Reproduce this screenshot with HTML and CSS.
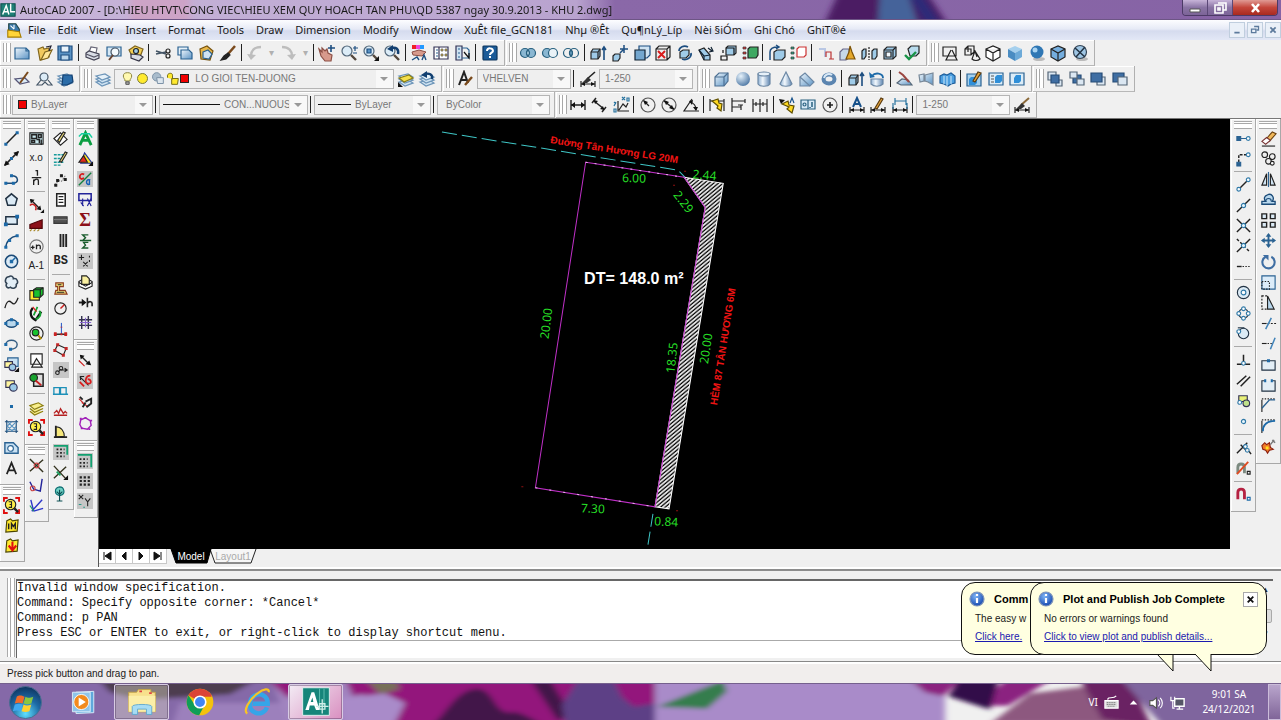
FILE: index.html
```html
<!DOCTYPE html>
<html lang="en">
<head>
<meta charset="utf-8">
<title>AutoCAD 2007</title>
<link rel="stylesheet" href="styles.css">
</head>
<body>
<svg class="defs" aria-hidden="true">
  <defs>
    <linearGradient id="gb" x1="0" y1="0" x2="1" y2="1"><stop offset="0" stop-color="#eef6fc"/><stop offset="1" stop-color="#5b93c4"/></linearGradient>
    <linearGradient id="gc" x1="0" x2="1"><stop offset="0" stop-color="#8fb0d2"/><stop offset=".4" stop-color="#f2f8fd"/><stop offset="1" stop-color="#5f86b2"/></linearGradient>
    <radialGradient id="gs" cx=".35" cy=".3" r=".8"><stop offset="0" stop-color="#e6f2fb"/><stop offset="1" stop-color="#44709f"/></radialGradient>
    <radialGradient id="gi" cx=".4" cy=".3" r=".8"><stop offset="0" stop-color="#7db4f4"/><stop offset="1" stop-color="#0a3ba8"/></radialGradient>
    <radialGradient id="orb" cx=".5" cy=".85" r=".9"><stop offset="0" stop-color="#5fe0ff"/><stop offset=".5" stop-color="#1d6aa5"/><stop offset="1" stop-color="#0c2c55"/></radialGradient>
    <pattern id="hatch" width="12" height="3" patternUnits="userSpaceOnUse" patternTransform="rotate(-40)"><path d="M0 1H12" stroke="#f4f4f4" stroke-width="1.7"/></pattern>
    <filter id="soft"><feGaussianBlur stdDeviation="3 2"/></filter>
  </defs>
  <symbol id="cube" viewBox="0 0 18 18"><path d="M3 6l3-3h9v9l-3 3H3z" fill="#9fcbe8"/><path d="M3 6h9v9M12 6l3-3"/></symbol>
  <symbol id="cubes" viewBox="0 0 18 18"><path d="M2 8l2-3h7v7l-2 3H2z" fill="#9fcbe8"/><path d="M2 8h7v7M9 8l2-3"/></symbol>
  <symbol id="layers" viewBox="0 0 18 18"><g stroke="#6b94b8" fill="#cfe3f2"><path d="M2 12l9-2 5 3-8 3z"/><path d="M2 9l9-2 5 3-8 3z"/><path d="M2 6l9-2 5 3-8 3z" fill="#e6f1f9"/></g></symbol>
  <symbol id="page" viewBox="0 0 18 18"><path d="M2 4h11l3 3v8H2z" fill="url(#gb)" stroke="#2a6292"/><path d="M13 4v3h3" stroke="#2a6292"/></symbol>
  <symbol id="dim" viewBox="0 0 18 18"><path d="M2 4v10M16 4v10M2 9h14" stroke-width="1.4"/><path d="M2 9l4-3v6zM16 9l-4-3v6z" fill="#111" stroke="none"/></symbol>
  <symbol id="dlow" viewBox="0 0 18 18"><path d="M2 11v6M16 11v6M2 14h14"/><path d="M2 14l4-2v4zM16 14l-4-2v4z" fill="#111" stroke="none"/></symbol>
  <symbol id="lens" viewBox="0 0 18 18"><circle cx="7" cy="7" r="5" fill="#dcecf7" stroke="#52677a"/><path d="M11 11l5 5" stroke="#54483e" stroke-width="2.4"/></symbol>
  <symbol id="printer" viewBox="0 0 18 18"><path d="M5 8l2-5 6 1-1 5" fill="#fff" stroke="#667"/><path d="M2 9l3-2 10 3v4l-5 2-8-3z" fill="#d9dde6" stroke="#445"/><path d="M2 10l8 3 5-2" stroke="#556"/></symbol>
  <symbol id="redlens" viewBox="0 0 18 18"><path d="M1 5V1h4M13 1h4v4M1 13v4h4M13 17h4v-4" stroke="#e01010" stroke-width="2"/><circle cx="8" cy="8" r="5.500" fill="#ffef4a"/><path d="M12 12l4 4" stroke-width="2.500"/><path d="M6 5h3v6H6M7 8h2"/></symbol>
  <symbol id="leaf" viewBox="0 0 18 18"><path d="M2 7l9-3 5 3-9 4zM2 10l5 4 9-4M2 13l5 4 9-4" fill="#f8ee8a" stroke="#8a7d12"/></symbol>
  <symbol id="node" viewBox="0 0 18 18"><circle cx="9" cy="9" r="2.200" fill="#e8f5fb" stroke="#2f79a8"/></symbol>
  <symbol id="info" viewBox="0 0 18 18"><circle cx="9" cy="9" r="7" fill="url(#gi)" stroke="#7f95b8"/><path d="M9 8v5M9 4v2" stroke="#fff" stroke-width="2.200"/></symbol>
</svg>

<header class="title">
  <svg class="title-art" viewBox="0 0 1281 20" preserveAspectRatio="none" aria-hidden="true"><g filter="url(#soft)"><path d="M838-6h90l20 32H824z" fill="#4b1a63"/><path d="M880-6h28l10 32h-40z" fill="#45649a"/><path d="M908-6h14l20 32h-16z" fill="#2f2c78"/><path d="M130-5h60v30h-60z" fill="#d49bbd" opacity=".6"/></g></svg>
  <svg class="i" viewBox="0 0 18 18"><path d="M1 2h16v14H1z" fill="#1e7f77" stroke="#0d4f4c"/><path d="M3 14l4-10 3 10M4 11h5M12 2v9h5" stroke="#fff" stroke-width="1.600"/></svg>
  <h1>AutoCAD 2007 - [D:\HIEU HTVT\CONG VIEC\HIEU XEM QUY HOACH TAN PHU\QD 5387 ngay 30.9.2013 - KHU 2.dwg]</h1>
  <div class="caption">
    <button aria-label="Minimize"><svg viewBox="0 0 20 14"><path d="M5 8h10v3H5z" fill="#fff" stroke="#555"/></svg></button>
    <button aria-label="Restore"><svg viewBox="0 0 20 14"><path d="M8 2h8v7h-3M5 4h8v8H5zM8 7h2v2H8z" stroke="#fff" stroke-width="1.600" fill="none"/></svg></button>
    <button class="close" aria-label="Close"><svg viewBox="0 0 20 14"><path d="M7 3l7 8M14 3l-7 8" stroke="#fff" stroke-width="2.600"/></svg></button>
  </div>
</header>

<nav class="menu" aria-label="Main menu">
  <svg class="i" viewBox="0 0 18 18"><path d="M3 2h8l4 6v8H3z" fill="#3a78a8" stroke="#244"/><path d="M2 9l13 2 2 6H2z" fill="#ffd53a" stroke="#a67c00"/><path d="M5 4l4 4M9 3v5" stroke="#fff"/></svg>
  <button>File</button><button>Edit</button><button>View</button><button>Insert</button><button>Format</button><button>Tools</button><button>Draw</button><button>Dimension</button><button>Modify</button><button>Window</button><button>XuÊt file_GCN181</button><button>Nhµ ®Êt</button><button>Qu¶nLý_Líp</button><button>Nèi §iÓm</button><button>Ghi Chó</button><button>GhiT®é</button>
  <div class="mdi">
    <button aria-label="Minimize drawing"><svg viewBox="0 0 16 16"><path d="M5 11h6" stroke="#5c7a9c" stroke-width="2"/></svg></button>
    <button aria-label="Restore drawing"><svg viewBox="0 0 16 16"><path d="M7 4h5v4h-2M4 7h5v4H4z" fill="none" stroke="#5c7a9c" stroke-width="1.500"/></svg></button>
    <button aria-label="Close drawing"><svg viewBox="0 0 16 16"><path d="M5 5l6 6M11 5l-6 6" stroke="#5c7a9c" stroke-width="2"/></svg></button>
  </div>
</nav>

<div class="row">
  <div class="bar w-standard" role="toolbar" aria-label="Standard">
    <button aria-label="New"><svg class="i"><use href="#page"/></svg></button>
    <button aria-label="Open"><svg class="i" viewBox="0 0 18 18"><path d="M3 5l5-2 1 2 5-1v9l-9 3z" fill="#f1c95e" stroke="#80651c"/><path d="M6 16l4-8 7-2-4 8z" fill="#ffe79a" stroke="#80651c"/><path d="M11 3l5-1-2 5" stroke="#223"/></svg></button>
    <button aria-label="Save"><svg class="i" viewBox="0 0 18 18"><path d="M2 2h14v14H2z" fill="#5b93c4" stroke="#1e4f80"/><path d="M5 2h8v6H5z" fill="#eaf3fa" stroke="#1e4f80"/><path d="M5 11h8v5H5z" fill="#bcd7ec" stroke="#1e4f80"/></svg></button>
    <i class="sep"></i>
    <button aria-label="Plot"><svg class="i"><use href="#printer"/></svg></button>
    <button aria-label="Plot preview"><svg class="i" viewBox="0 0 18 18"><path d="M2 3h14v9H2z" fill="#d7e9f6" stroke="#2a6292"/><circle cx="10" cy="8" r="4" fill="#f4fafe" stroke="#456"/><path d="M8 11l-4 5" stroke="#643" stroke-width="2"/></svg></button>
    <button aria-label="Publish"><svg class="i" viewBox="0 0 18 18"><path d="M2 6l6-4 8 3-3 8-8-1z" fill="#f3cf55" stroke="#80651c"/><path d="M4 10l9 1 3 2-4 4-8-3z" fill="#d9dde6" stroke="#334"/><circle cx="9" cy="7" r="2.500" fill="#9fcbe8"/></svg></button>
    <i class="sep"></i>
    <button aria-label="Cut"><svg class="i" viewBox="0 0 18 18"><path d="M2 7l10 3M2 10l10-2" stroke="#456" stroke-width="1.600"/><circle cx="14" cy="7" r="2"/><circle cx="14" cy="12" r="2"/></svg></button>
    <button aria-label="Copy"><svg class="i" viewBox="0 0 18 18"><path d="M2 3h10v8H2z" fill="#e6f1f9" stroke="#2a6292"/><path d="M5 6h8l3 3v6H5z" fill="url(#gb)" stroke="#2a6292"/></svg></button>
    <button aria-label="Paste"><svg class="i" viewBox="0 0 18 18"><path d="M3 5l7-3 6 5-3 9-9-1z" fill="#e9b84a" stroke="#77520c"/><path d="M6 8l5-2 4 4-3 5-6-1z" fill="#cfe3f2" stroke="#2a6292"/></svg></button>
    <button aria-label="Match properties"><svg class="i" viewBox="0 0 18 18"><path d="M16 2l-7 8" stroke="#7a4a1c" stroke-width="2.500"/><path d="M9 9l2 2-4 4-5 1 3-4z" fill="#222"/></svg></button>
    <i class="sep"></i>
    <button aria-label="Undo"><svg class="i" viewBox="0 0 18 18"><path d="M15 3c-7 0-10 4-10 9" stroke="#bdbdbd" stroke-width="2.500"/><path d="M1 10l4 6 5-5z" fill="#bdbdbd" stroke="none"/></svg></button>
    <button class="drop" aria-label="Undo list">▾</button>
    <button aria-label="Redo"><svg class="i" viewBox="0 0 18 18"><path d="M3 3c7 0 10 4 10 9" stroke="#bdbdbd" stroke-width="2.500"/><path d="M17 10l-4 6-5-5z" fill="#bdbdbd" stroke="none"/></svg></button>
    <button class="drop" aria-label="Redo list">▾</button>
    <i class="sep"></i>
    <button aria-label="Pan"><svg class="i" viewBox="0 0 18 18"><path d="M1 5l3 3V4l3 3 2-2 1 4 4 2-1 6H7l-4-5z" fill="#d79a8c" stroke="#8c4f45"/><path d="M13 1v7M10 4h7" stroke="#1d4e80" stroke-width="1.600"/></svg></button>
    <button aria-label="Zoom realtime"><svg class="i" viewBox="0 0 18 18"><use href="#lens"/><path d="M13 4h5M15 2v5M13 9h4" stroke="#1d4e80"/></svg></button>
    <button aria-label="Zoom window"><svg class="i" viewBox="0 0 18 18"><use href="#lens"/><path d="M5 5h4v4H5z" fill="#5b93c4" stroke="#1d4e80"/><path d="M17 12v5h-5z" fill="#111" stroke="none"/></svg></button>
    <button aria-label="Zoom previous"><svg class="i" viewBox="0 0 18 18"><use href="#lens"/><path d="M15 10c1-5-2-7-6-6" stroke="#123f70" stroke-width="2.500"/><path d="M4 5l6-4v7z" fill="#123f70" stroke="none"/></svg></button>
    <i class="sep"></i>
    <button aria-label="Properties"><svg class="i flat" viewBox="0 0 18 18"><path d="M2 1h4v4H2z" fill="#e22"/><path d="M6 1h4v4H6z" fill="#e4d"/><path d="M10 1h4v4h-4z" fill="#29f"/><path d="M2 8l7-2 7 2-4 4-9-1z" fill="#d79a8c" stroke="#8c4f45" stroke-width="1"/><path d="M2 16l5-3 2 3M12 16l2-5 2 5" stroke="#1d4e80" stroke-width="1.400"/></svg></button>
    <button aria-label="Design center"><svg class="i" viewBox="0 0 18 18"><path d="M2 3h14v12H2zM7 3v12" fill="#fff" stroke="#335"/><path d="M4 6h2M4 9h2M4 12h2" stroke="#2a6292"/><path d="M9 5h2v2H9zM13 5h2v2h-2zM9 10h2v2H9zM13 10h2v2h-2z" fill="#e8c547" stroke="#555" stroke-width=".7"/></svg></button>
    <button aria-label="Tool palettes"><svg class="i" viewBox="0 0 18 18"><path d="M2 2h6v14H2z" fill="#cfe3f2" stroke="#335"/><path d="M8 4h5l2 2v8H8M4 5h2M4 9h2M4 13h2" stroke="#2a6292"/><path d="M10 8l5 6v-5" stroke="#111"/></svg></button>
    <i class="sep"></i>
    <button aria-label="Help"><svg class="i" viewBox="0 0 18 18"><rect x="2" y="2" width="14" height="14" rx="1" fill="#1b5b98" stroke="#0d355c"/><path d="M6 7c0-4 6-3 6 0 0 2-3 1-3 4M9 12v2" stroke="#fff" stroke-width="2"/></svg></button>
  </div>
  <div class="bar w-solid" role="toolbar" aria-label="Solid editing">
    <button aria-label="Union"><svg class="i" viewBox="0 0 18 18"><circle cx="6" cy="9" r="4.500" fill="#8ab7d2" stroke="#28607f"/><circle cx="12" cy="9" r="4.500" fill="#8ab7d2" stroke="#28607f"/><path d="M9 6c-2 2-2 4 0 6 2-2 2-4 0-6z" fill="#b9dcec" stroke="#28607f"/></svg></button>
    <button aria-label="Subtract"><svg class="i" viewBox="0 0 18 18"><circle cx="6" cy="9" r="4.500" fill="#8ab7d2" stroke="#28607f"/><circle cx="12" cy="9" r="4.500" fill="#e9f2f7" stroke="#28607f"/></svg></button>
    <button aria-label="Intersect"><svg class="i" viewBox="0 0 18 18"><circle cx="6" cy="9" r="4.500" stroke="#28607f"/><circle cx="12" cy="9" r="4.500" stroke="#28607f"/><path d="M9 6c-2 2-2 4 0 6 2-2 2-4 0-6z" fill="#6ea3c4" stroke="#28607f"/></svg></button>
    <i class="sep"></i>
    <button aria-label="Extrude faces"><svg class="i" viewBox="0 0 18 18"><use href="#cubes"/><path d="M15 16V3M13 6l2-3 2 3" stroke="#1d4e80" stroke-width="1.600"/></svg></button>
    <button aria-label="Move faces"><svg class="i" viewBox="0 0 18 18"><path d="M2 12l2-2h5v4l-2 3H2z" fill="#9fcbe8"/><path d="M9 9l3-3M13 1v8M9 5h8" stroke="#1d4e80" stroke-width="1.500"/></svg></button>
    <button aria-label="Offset faces"><svg class="i" viewBox="0 0 18 18"><path d="M6 2h11v9l-3 3H6z" fill="#cfe3f2" stroke="#1d4e80"/><path d="M2 6h10v10H2z" fill="#74a7cf" stroke="#123"/></svg></button>
    <button aria-label="Delete faces"><svg class="i" viewBox="0 0 18 18"><path d="M2 5l3-3h11v11l-3 3H2zM2 5h11v11M13 5l3-3" fill="#eee"/><path d="M4 7l7 7M11 7l-7 7" stroke="#d81c1c" stroke-width="2"/></svg></button>
    <button aria-label="Rotate faces"><svg class="i" viewBox="0 0 18 18"><path d="M4 8l3-2h6v5l-3 3H4z" fill="#9fcbe8"/><path d="M3 7c0-4 5-6 9-4M15 9c1 4-4 8-9 6" stroke="#1d4e80" stroke-width="1.700"/></svg></button>
    <button aria-label="Taper faces"><svg class="i" viewBox="0 0 18 18"><path d="M2 6l5-2 6 7v5H7z" fill="#9fcbe8"/><path d="M2 6l5 6v4M7 12l6-1M11 4l4 3M14 3l2 4-4 1" stroke="#123"/></svg></button>
    <button aria-label="Copy faces"><svg class="i" viewBox="0 0 18 18"><path d="M7 4l2-2h8v7l-2 2H7z" fill="#9fcbe8"/><path d="M7 4h8v7M2 12h6v4H2zM4 9V6" stroke="#111"/></svg></button>
    <button aria-label="Color faces"><svg class="i" viewBox="0 0 18 18"><path d="M7 5l2-2h8v8l-2 3H7z" fill="#3fa862"/><path d="M2 3h3v2H2zM2 8h3v2H2zM2 13h3v2H2z" fill="#d33" stroke="#333" stroke-width=".7"/></svg></button>
    <i class="sep"></i>
    <button aria-label="Copy edges"><svg class="i" viewBox="0 0 18 18"><path d="M6 8l3-2h8v7l-3 3H6z" fill="#9fcbe8"/><path d="M2 16V8c0-4 4-5 8-5M8 1l3 2-3 2" stroke="#1d4e80" stroke-width="1.500"/></svg></button>
    <button aria-label="Color edges"><svg class="i" viewBox="0 0 18 18"><path d="M8 5l2-2h7v8l-2 2H8z" fill="#fff" stroke="#c33"/><path d="M2 3h3v2H2zM2 8h3v2H2zM2 13h3v2H2z" fill="#3a8" stroke="#333" stroke-width=".7"/></svg></button>
    <i class="sep"></i>
    <button aria-label="Imprint"><svg class="i" viewBox="0 0 18 18"><path d="M2 5h6v8" stroke="#b9c7e4" stroke-width="2"/><path d="M9 13V8h5v7M12 15h5" stroke="#b33"/></svg></button>
    <button aria-label="Clean"><svg class="i" viewBox="0 0 18 18"><path d="M2 8l3-3h6v9l-3 2H2z" fill="#c6d8e8" stroke="#668"/><path d="M12 2l2 6 3 7H8l3-7z" fill="#e5a92c" stroke="#7b5208"/></svg></button>
    <button aria-label="Separate"><svg class="i" viewBox="0 0 18 18"><path d="M2 7l2-2h2v7l-2 3H2zM12 7l2-2h3v7l-2 3h-3z" fill="#9fcbe8"/><path d="M9 3v13" stroke-dasharray="2 1"/></svg></button>
    <button aria-label="Shell"><svg class="i" viewBox="0 0 18 18"><use href="#cube"/><path d="M5 8h5v5H5z" fill="#eef6fc"/></svg></button>
    <button aria-label="Check"><svg class="i" viewBox="0 0 18 18"><path d="M5 5l3-3h8v7l-3 3H7z" fill="#b8dcee"/><path d="M2 11l4 4 7-7" stroke="#189447" stroke-width="2.400"/></svg></button>
  </div>
  <div class="bar w-visual" role="toolbar" aria-label="Visual styles">
    <button aria-label="2D wireframe"><svg class="i" viewBox="0 0 18 18"><path d="M2 3h13v9H2zM10 6l-5 10h11L11 6"/></svg></button>
    <button aria-label="3D wireframe"><svg class="i" viewBox="0 0 18 18"><path d="M2 5l3-3h6v6l-3 3H2zM2 5h6v6M5 2v6M12 7l-3 8c2 2 6 2 8 0zM12 7l2 6"/></svg></button>
    <button aria-label="Hidden"><svg class="i" viewBox="0 0 18 18"><path d="M2 5l7-3 7 3v8l-7 4-7-4zM2 5l7 4 7-4M9 9v8" fill="#fff"/></svg></button>
    <button aria-label="Realistic"><svg class="i flat" viewBox="0 0 18 18"><path d="M2 5l7-3 7 3-7 4z" fill="#a5d0ee"/><path d="M2 5l7 4v8l-7-4z" fill="#4a8cc2"/><path d="M16 5L9 9v8l7-4z" fill="#6daad8"/></svg></button>
    <button aria-label="Conceptual"><svg class="i flat" viewBox="0 0 18 18"><ellipse cx="11" cy="15" rx="6" ry="2" fill="#bbb"/><circle cx="9" cy="8" r="6.500" fill="#2f77b4"/><circle cx="7" cy="6" r="2.500" fill="#a9d4f2"/></svg></button>
    <button aria-label="Shaded cube"><svg class="i" viewBox="0 0 18 18"><path d="M2 5l7-3 7 3v8l-7 4-7-4z" fill="#75aede"/><path d="M2 5l7 4 7-4M9 9v8"/></svg></button>
    <button aria-label="Manage styles"><svg class="i" viewBox="0 0 18 18"><ellipse cx="11" cy="15" rx="6" ry="2" fill="#bbb" stroke="none"/><circle cx="9" cy="8" r="6.500" fill="#9fc6e4" stroke="#345"/><path d="M4 4l10 9M14 3L5 13" stroke="#234" stroke-width="1.500"/></svg></button>
  </div>
</div>

<div class="row">
  <div class="bar w-sheet" role="toolbar" aria-label="Workspaces">
    <button aria-label="Edit block"><svg class="i" viewBox="0 0 18 18"><path d="M2 9l5 5 9-2-4-4z" fill="#dcecf7" stroke="#557"/><path d="M7 13l8-11" stroke="#7a4a1c" stroke-width="2"/></svg></button>
    <button aria-label="Find"><svg class="i" viewBox="0 0 18 18"><circle cx="9" cy="7" r="4" fill="#dcecf7" stroke="#456"/><path d="M6 10l-4 5h5l3-3 3 3h4l-4-5" stroke="#456"/></svg></button>
    <button aria-label="Layer states"><svg class="i" viewBox="0 0 18 18"><use href="#layers"/><path d="M7 5h9l1 7-6 3H6z" fill="#2b6ca8" stroke="#123f70"/></svg></button>
  </div>
  <div class="bar w-layers" role="toolbar" aria-label="Layers">
    <button aria-label="Layer manager"><svg class="i"><use href="#layers"/></svg></button>
    <label class="combo c-layer" aria-label="Layer">
      <svg class="i" viewBox="0 0 18 18"><path d="M6 12c0-3-2-3-2-6a5 4 0 0 1 10 0c0 3-2 3-2 6z" fill="#fff9b0" stroke="#8d8740"/><path d="M7 13h4v3H7z" fill="#aaa" stroke="#555"/></svg><svg class="i" viewBox="0 0 18 18"><circle cx="9" cy="9" r="6" fill="#ffea2e" stroke="#7b7b3a"/></svg><svg class="i" viewBox="0 0 18 18"><circle cx="8" cy="7" r="5" fill="#a9bccc" stroke="#7d93a8"/><path d="M8 8h8v7H9z" fill="#dde6ee" stroke="#7d93a8"/></svg><svg class="i" viewBox="0 0 18 18"><path d="M8 9h8l-1 7H8zM3 8V5c1-3 6-3 6 0v5" fill="#ffe92e" stroke="#77701c"/></svg><i class="swatch"></i>
      <select><option>LO GIOI TEN-DUONG</option></select>
    </label>
    <button aria-label="Make current"><svg class="i" viewBox="0 0 18 18"><use href="#layers"/><path d="M2 8l10-3 4 3-9 4z" fill="#f5e04a" stroke="#8a7d12"/><path d="M1 12v5h5z" fill="#111" stroke="none"/></svg></button>
    <button aria-label="Layer previous"><svg class="i" viewBox="0 0 18 18"><use href="#layers"/><path d="M14 9c1-5-3-6-7-5" stroke="#123f70" stroke-width="2.400"/><path d="M3 5l6-4v7z" fill="#123f70" stroke="none"/></svg></button>
  </div>
  <div class="bar w-styles" role="toolbar" aria-label="Styles">
    <button aria-label="Text style"><svg class="i" viewBox="0 0 18 18"><path d="M3 15L8 2l4 11M5 10h5" stroke-width="2"/><path d="M9 15l7-8" stroke="#7a4a1c" stroke-width="2.400"/></svg></button>
    <label class="combo c-style" aria-label="Text style"><select><option>VHELVEN</option></select></label>
    <i class="sep"></i>
    <button aria-label="Dimension style"><svg class="i" viewBox="0 0 18 18"><use href="#dlow"/><path d="M16 2L8 9" stroke-width="1.600"/><path d="M9 7l3 3-4 3H3z" fill="#333" stroke="none"/></svg></button>
    <label class="combo c-style" aria-label="Dimension style"><select><option>1-250</option></select></label>
  </div>
  <div class="bar w-model" role="toolbar" aria-label="Modeling">
    <button aria-label="Box"><svg class="i" viewBox="0 0 18 18"><path d="M3 7l4-4h9v8l-4 5H3z" fill="url(#gb)" stroke="#4d7093"/><path d="M3 7h9v9M12 7l4-4" stroke="#4d7093"/></svg></button>
    <button aria-label="Sphere"><svg class="i" viewBox="0 0 18 18"><circle cx="9" cy="9" r="7" fill="url(#gs)" stroke="none"/></svg></button>
    <button aria-label="Cylinder"><svg class="i" viewBox="0 0 18 18"><path d="M3 4v10c2 3 10 3 12 0V4z" fill="url(#gc)" stroke="#6c88a5"/><ellipse cx="9" cy="4" rx="6" ry="2" fill="#e7f1f9" stroke="#6c88a5"/></svg></button>
    <button aria-label="Cone"><svg class="i" viewBox="0 0 18 18"><path d="M9 2L3 14c2 3 10 3 12 0z" fill="url(#gc)" stroke="#6c88a5"/></svg></button>
    <button aria-label="Wedge"><svg class="i" viewBox="0 0 18 18"><path d="M2 7l5-4 9 9-4 4H2z" fill="url(#gb)" stroke="#6c88a5"/><path d="M2 7l10 9" stroke="#6c88a5"/></svg></button>
    <button aria-label="Torus"><svg class="i" viewBox="0 0 18 18"><ellipse cx="9" cy="9" rx="5.500" ry="4.500" stroke="#5b85b0" stroke-width="4"/><path d="M4 8a5 5 0 0 1 8-3" stroke="#d8e8f5" stroke-width="2"/></svg></button>
    <i class="sep"></i>
    <button aria-label="Extrude"><svg class="i" viewBox="0 0 18 18"><use href="#cubes"/><path d="M15 16V3M13 6l2-3 2 3" stroke="#1d4e80" stroke-width="1.600"/></svg></button>
    <button aria-label="Revolve"><svg class="i" viewBox="0 0 18 18"><path d="M3 9h12v5c-3 3-9 3-12 0z" fill="url(#gc)" stroke="#6c88a5"/><path d="M15 8c0-5-8-6-11-2" stroke="#1d6aa8" stroke-width="1.800"/><path d="M1 2l1 6 5-1z" fill="#1d6aa8" stroke="none"/></svg></button>
    <i class="sep"></i>
    <button aria-label="Planar surface"><svg class="i" viewBox="0 0 18 18"><path d="M2 13l5-4 6 1 4 5H6z" fill="url(#gb)" stroke="#567"/><path d="M4 2l4 3 6 7" stroke="#9a4540" stroke-width="2"/></svg></button>
    <button aria-label="3D move"><svg class="i" viewBox="0 0 18 18"><path d="M2 5l5-1v7l-4 1zM8 5l8-2v12l-5-3-3-1z" fill="url(#gb)" stroke="#789"/></svg></button>
    <button aria-label="3D array"><svg class="i" viewBox="0 0 18 18"><path d="M2 6l4-2 3 1 4-2 4 3v7l-4 1-3 2-4-2-4-1z" fill="#4c9fe0" stroke="#1d5d9a"/><path d="M6 6v8M9 6v10M13 6v8" stroke="#b8dcf6"/></svg></button>
    <i class="sep"></i>
    <button aria-label="Edit workspace"><svg class="i" viewBox="0 0 18 18"><path d="M2 4h14v12H2z" fill="#a5d0ee" stroke="#2a6292"/><path d="M4 9l2-2h6v6l-2 2H4z" fill="#2f8fd8" stroke="none"/><path d="M8 11l5-9 3 1-6 9z" fill="#e7a53c" stroke="#5a3b10"/></svg></button>
    <button aria-label="Sheet list"><svg class="i" viewBox="0 0 18 18"><path d="M2 3h14v12H2z" fill="#dcecf7" stroke="#2a6292"/><path d="M4 6h3M4 9h3M4 12h3" stroke="#555"/><path d="M8 7l2-2h5v6l-2 2H8z" fill="#2f8fd8" stroke="none"/></svg></button>
    <button aria-label="Viewport"><svg class="i" viewBox="0 0 18 18"><path d="M2 3h14v12H2z" fill="#dcecf7" stroke="#2a6292"/><path d="M6 8l2-3h5v6l-2 2H6z" fill="#2f8fd8" stroke="none"/></svg></button>
  </div>
  <div class="bar w-order" role="toolbar" aria-label="Draw order">
    <button aria-label="Bring to front"><svg class="i" viewBox="0 0 18 18"><path d="M2 2h8v8H2zM10 10h6v6h-6z" fill="#dbe7f2" stroke="#567"/><path d="M5 5h8v8H5z" fill="#3f6ea3" stroke="#274c77"/></svg></button>
    <button aria-label="Send to back"><svg class="i" viewBox="0 0 18 18"><path d="M5 5h8v8H5z" fill="#3f6ea3" stroke="#274c77"/><path d="M2 2h7v6H2zM9 9h7v6H9z" fill="#dbe7f2" stroke="#567"/></svg></button>
    <button aria-label="Bring above"><svg class="i" viewBox="0 0 18 18"><path d="M8 7h8v8H8z" fill="#dbe7f2" stroke="#567"/><path d="M2 3h11v9H2z" fill="#3f6ea3" stroke="#274c77"/></svg></button>
    <button aria-label="Send under"><svg class="i" viewBox="0 0 18 18"><path d="M2 3h11v9H2z" fill="#3f6ea3" stroke="#274c77"/><path d="M7 7h9v8H7z" fill="#dbe7f2" stroke="#567"/></svg></button>
  </div>
</div>

<div class="row">
  <div class="bar w-props" role="toolbar" aria-label="Object properties">
    <label class="combo c-color" aria-label="Color"><i class="swatch"></i><select><option>ByLayer</option></select></label>
    <i class="sep"></i>
    <label class="combo c-ltype" aria-label="Linetype"><i class="rule"></i><select><option>CON...NUOUS</option></select></label>
    <i class="sep"></i>
    <label class="combo c-weight" aria-label="Lineweight"><i class="rule short"></i><select><option>ByLayer</option></select></label>
    <i class="sep"></i>
    <label class="combo c-plot" aria-label="Plot style"><select><option>ByColor</option></select></label>
  </div>
  <div class="bar w-dim" role="toolbar" aria-label="Dimension">
    <button aria-label="Linear"><svg class="i"><use href="#dim"/></svg></button>
    <button aria-label="Aligned"><svg class="i" viewBox="0 0 18 18"><path d="M6 2L2 7M16 11l-4 5M4 5l10 8" stroke-width="1.500"/><path d="M4 4l4 1-3 3zM14 14l-4-1 3-3z" fill="#111" stroke="none"/></svg></button>
    <button aria-label="Ordinate"><svg class="i" viewBox="0 0 18 18"><path d="M6 5v10h11M7 14l4-6 3 3 2-4" /><path d="M2 6l2 2M4 6l-2 4M2 13h2v3H2zM10 1l3 3M13 1l-3 3M15 2h2v3h-2z" stroke="#28739f"/></svg></button>
    <i class="sep"></i>
    <button aria-label="Radius"><svg class="i" viewBox="0 0 18 18"><circle cx="9" cy="9" r="7" stroke="#555"/><path d="M10 10L5 5"/><path d="M4 4l5 2-3 3z" fill="#111" stroke="none"/></svg></button>
    <button aria-label="Diameter"><svg class="i" viewBox="0 0 18 18"><circle cx="9" cy="9" r="7" stroke="#555"/><path d="M4 5l10 8" stroke-width="1.500"/><path d="M4 4l5 2-3 3zM14 14l-5-2 3-3z" fill="#111" stroke="none"/></svg></button>
    <button aria-label="Angular"><svg class="i" viewBox="0 0 18 18"><path d="M10 3L2 15h15M8 6c4 1 6 4 6 8"/><path d="M7 5l4-1-1 5zM14 15l-3-4h5z" fill="#111" stroke="none"/></svg></button>
    <i class="sep"></i>
    <button aria-label="Quick dimension"><svg class="i" viewBox="0 0 18 18"><path d="M2 3v12M16 3v12M2 5h14"/><path d="M4 5l6-2 1 4 3 1-1 7-4-3 1-2z" fill="#ffd91f" stroke="#5e4e00"/></svg></button>
    <button aria-label="Baseline"><svg class="i" viewBox="0 0 18 18"><path d="M2 2v14M15 3v4M11 9v5M2 5h13M2 11h9M8 9h5"/></svg></button>
    <button aria-label="Continue"><svg class="i" viewBox="0 0 18 18"><path d="M2 3v13M9 3v13M16 3v13M2 8h14M5 6v4M12 6v4"/></svg></button>
    <i class="sep"></i>
    <button aria-label="Quick leader"><svg class="i" viewBox="0 0 18 18"><path d="M4 8l6-3 1 4 5 1-2 7-5-4 2-2z" fill="#ffd91f" stroke="#5e4e00"/><path d="M1 3l6 1-4 4z" fill="#111" stroke="none"/><path d="M12 7l2-5 2 5" stroke="#17518a"/></svg></button>
    <button aria-label="Tolerance"><svg class="i" viewBox="0 0 18 18"><path d="M2 4h14v9H2zM9 4v9" fill="#d7e9f6" stroke="#28607f"/><circle cx="5.500" cy="8.500" r="1.500" stroke="#28607f"/><path d="M11 11v1M13 6v5" stroke="#28607f" stroke-width="1.500"/></svg></button>
    <button aria-label="Center mark"><svg class="i" viewBox="0 0 18 18"><circle cx="9" cy="9" r="7" stroke="#555"/><path d="M9 6v6M6 9h6" stroke-width="1.700"/></svg></button>
    <i class="sep"></i>
    <button aria-label="Text edit"><svg class="i" viewBox="0 0 18 18"><use href="#dlow"/><path d="M5 11l4-9 4 9M6 8h6" stroke="#17518a" stroke-width="2"/></svg></button>
    <button aria-label="Dimension edit"><svg class="i" viewBox="0 0 18 18"><use href="#dlow"/><path d="M6 12l6-10 2 1-6 10z" fill="#e7a53c" stroke="#5a3b10"/></svg></button>
    <button aria-label="Dimension update"><svg class="i" viewBox="0 0 18 18"><use href="#dlow"/><path d="M2 7v6M16 7v6M4 2v7M15 2v7M4 5h11" stroke="#28739f"/></svg></button>
    <i class="sep"></i>
    <label class="combo c-style" aria-label="Current dimension style"><select><option>1-250</option></select></label>
    <button aria-label="Apply style"><svg class="i" viewBox="0 0 18 18"><use href="#dlow"/><path d="M16 2L8 9" stroke="#8b6a3a" stroke-width="2"/><path d="M9 7l3 3-4 3H3z" fill="#333" stroke="none"/></svg></button>
  </div>
</div>

<main class="work">
  <div class="dock dock-left">
    <div class="col">
      <div class="pal h-draw" role="toolbar" aria-label="Draw">
        <button aria-label="Line"><svg class="i" viewBox="0 0 18 18"><path d="M3 15L15 3" stroke-width="1.600"/><path d="M2 14h2v2H2zM14 2h2v2h-2z" stroke="#1d6aa8" fill="#1d6aa8"/></svg></button>
        <button aria-label="Construction line"><svg class="i" viewBox="0 0 18 18"><path d="M2 16L16 2" stroke-width="1.600"/><path d="M1 17l2-6 4 4zM17 1l-2 6-4-4z" fill="#111" stroke="none"/><path d="M8 8h2v2H8z" fill="#1d6aa8" stroke="#1d6aa8"/></svg></button>
        <button aria-label="Polyline"><svg class="i" viewBox="0 0 18 18"><path d="M3 13h8c6 0 6-8-2-8" stroke="#1b4b78" stroke-width="1.600"/><path d="M2 12h2v2H2zM10 12h2v2h-2zM8 4h2v2H8z" fill="#1d6aa8" stroke="#1d6aa8"/></svg></button>
        <button aria-label="Polygon"><svg class="i" viewBox="0 0 18 18"><path d="M9 3l6 5-2 7H5L3 8z" fill="#dbeaf5" stroke="#234" stroke-width="1.600"/></svg></button>
        <button aria-label="Rectangle"><svg class="i" viewBox="0 0 18 18"><path d="M3 5h12v8H3z" fill="#dbeaf5" stroke="#234" stroke-width="1.600"/><path d="M2 12h2v2H2zM14 4h2v2h-2z" stroke="#1d6aa8" stroke-width="2"/></svg></button>
        <button aria-label="Arc"><svg class="i" viewBox="0 0 18 18"><path d="M3 16C3 9 8 4 15 3" stroke="#1b4b78" stroke-width="1.600"/><path d="M2 14h2v2H2zM6 7h2v2H6zM14 2h2v2h-2z" stroke="#1d6aa8" fill="#1d6aa8"/></svg></button>
        <button aria-label="Circle"><svg class="i" viewBox="0 0 18 18"><circle cx="9" cy="9" r="6.500" fill="#dbeaf5" stroke="#1b4b78" stroke-width="1.600"/><path d="M9 9l4-4M8 8h2v2H8z" stroke="#1d6aa8" stroke-width="1.600"/></svg></button>
        <button aria-label="Revision cloud"><svg class="i" viewBox="0 0 18 18"><path d="M6 3c3-2 5 0 5 2 4-1 6 4 3 6 1 4-4 5-6 3-3 2-6-1-4-4-3-2-1-7 2-7z" fill="#e3eef6" stroke="#345" stroke-width="1.600"/></svg></button>
        <button aria-label="Spline"><svg class="i" viewBox="0 0 18 18"><path d="M2 14c2-9 5-8 7-6s4 3 7-5" stroke-width="1.400"/></svg></button>
        <button aria-label="Ellipse"><svg class="i" viewBox="0 0 18 18"><ellipse cx="9" cy="9" rx="6" ry="4" fill="#b8d7ec" stroke="#1b4b78" stroke-width="1.500"/><path d="M2 8h2v2H2zM14 8h2v2h-2zM8 4h2v2H8z" fill="#1d6aa8" stroke="#1d6aa8"/></svg></button>
        <button aria-label="Ellipse arc"><svg class="i" viewBox="0 0 18 18"><path d="M3 9c0-6 12-6 12 0 0 3-3 5-7 5" stroke="#345d82" stroke-width="1.500"/><path d="M2 8h2v2H2zM7 13h2v2H7z" fill="#1d6aa8" stroke="#1d6aa8"/></svg></button>
        <button aria-label="Insert block"><svg class="i" viewBox="0 0 18 18"><path d="M5 2h11v9H5z" fill="#c9e1f3" stroke="#2a6292"/><path d="M2 6h8v6H2z" fill="#fff6a0" stroke="#335"/><circle cx="10" cy="12" r="3.500" fill="#9cc9e6" stroke="#335"/><path d="M17 12v5h-5z" fill="#111" stroke="none"/></svg></button>
        <button aria-label="Make block"><svg class="i" viewBox="0 0 18 18"><path d="M3 4h9v7H3z" fill="#fff6a0" stroke="#335"/><circle cx="11" cy="11" r="4" fill="#9cc9e6" stroke="#335"/></svg></button>
        <button aria-label="Point"><svg class="i" viewBox="0 0 18 18"><path d="M8 8h2v2H8z" fill="#1d6aa8" stroke="#1d6aa8"/></svg></button>
        <button aria-label="Hatch"><svg class="i" viewBox="0 0 18 18"><path d="M4 2v14M14 2v14M2 4h14M2 14h14" stroke="#1b4b78"/><path d="M4 9l5-5M4 14L14 4M9 14l5-5M5 4l9 9M4 8l6 6" stroke="#5a93bf"/></svg></button>
        <button aria-label="Region"><svg class="i" viewBox="0 0 18 18"><path d="M2 15V4h9l5 5v6z" fill="#c9e1f3" stroke="#2a6292" stroke-width="1.500"/><circle cx="8" cy="10" r="3" fill="#fff" stroke="#2a6292"/></svg></button>
        <button aria-label="Multiline text"><svg class="i" viewBox="0 0 18 18"><path d="M4 15L9 3l5 12M6 11h6" stroke-width="1.800"/></svg></button>
      </div>
      <div class="pal h-three second" role="toolbar" aria-label="Custom tools">
        <button aria-label="Find area"><svg class="i"><use href="#redlens"/></svg></button>
        <button aria-label="Import"><svg class="i" viewBox="0 0 18 18"><path d="M4 4l4-2 2 2 6-1-1 12-12 1z" fill="#ffe92e" stroke="#4b4500"/><path d="M6 7v6M9 13V7l2 3 2-3v6" stroke-width="1.500"/></svg></button>
        <button aria-label="Load"><svg class="i" viewBox="0 0 18 18"><path d="M4 4l4-2 2 2 6-1-1 12-12 1z" fill="#ffe92e" stroke="#4b4500"/><path d="M10 5v8M6 9l4 5 4-5" stroke="#e01010" stroke-width="2.200"/></svg></button>
      </div>
    </div>
    <div class="col">
      <div class="pal h-survey" role="toolbar" aria-label="Survey">
        <button aria-label="Sheet setup"><svg class="i" viewBox="0 0 18 18"><path d="M2 3h14v12H2z" fill="#c9e8ee"/><path d="M4 5h5v4H4zM11 5h3v3h-3zM4 11h3v2H4zM9 10h3v4M14 10v6" stroke-width="1.500"/></svg></button>
        <button aria-label="Coordinates"><span class="glyph">x.o</span></button>
        <button aria-label="Numbering"><svg class="i" viewBox="0 0 18 18"><path d="M8 1l2-1v6M4 8h10M6 16v-6M6 12c2-3 5-3 5 0v4" stroke-width="1.400"/></svg></button>
        <i class="hsep"></i>
        <button aria-label="Rotate"><svg class="i" viewBox="0 0 18 18"><path d="M3 3l10 10" stroke-width="1.500"/><path d="M2 2l5 1-4 4zM14 14l-5-1 4-4z" fill="#111" stroke="none"/><path d="M2 9c3-3 8 0 6 5" stroke="#c42020" stroke-width="1.600"/><path d="M17 13v4h-4z" fill="#111" stroke="none"/></svg></button>
        <button aria-label="Slope"><svg class="i" viewBox="0 0 18 18"><path d="M2 8l13-5v9H2z" fill="#8c1018" stroke="#4e0508"/><path d="M2 15l2-2M6 15l2-2M10 15l2-2" stroke="#a58522"/></svg></button>
        <button aria-label="Increment"><svg class="i" viewBox="0 0 18 18"><circle cx="9" cy="9" r="7" stroke="#777"/><path d="M3 10h4M5 8v4M9 12V7M9 9c1-2 4-2 4 0v3" stroke-width="1.400"/></svg></button>
        <button aria-label="Label A-1"><span class="glyph">A-1</span></button>
        <i class="hsep"></i>
        <button aria-label="Green block"><svg class="i" viewBox="0 0 18 18"><path d="M2 6h10v10H2z" fill="#ffe92e"/><path d="M6 5l3-2h7v7l-3 3H6z" fill="#18c22e"/><path d="M6 5h7v8M13 5l3-2"/></svg></button>
        <button aria-label="Swap"><svg class="i" viewBox="0 0 18 18"><path d="M5 3c-4 5-2 11 3 13l6-9" stroke="#111" stroke-width="2.400"/><path d="M10 2L6 11M12 6c3 4 0 8-4 9" stroke="#14a030" stroke-width="1.800"/><path d="M5 2l4 5" stroke="#d11"/></svg></button>
        <button aria-label="Inspect"><svg class="i" viewBox="0 0 18 18"><circle cx="9" cy="9" r="7"/><circle cx="8" cy="8" r="3.500" fill="#18c22e"/><path d="M11 11l3 4" stroke="#b18b00" stroke-width="2"/></svg></button>
        <i class="hsep"></i>
        <button aria-label="Region label"><svg class="i" viewBox="0 0 18 18"><path d="M3 2h12v11H3zM9 7l-5 9h11z" fill="#fff"/></svg></button>
        <button aria-label="Search sheet"><svg class="i" viewBox="0 0 18 18"><path d="M6 2h10v13H6z" fill="#ddd" stroke-width="1.600"/><circle cx="6" cy="6" r="4" fill="#18a22e"/><path d="M8 9l6 5" stroke="#c42020" stroke-width="2"/></svg></button>
        <i class="hsep"></i>
        <button aria-label="Map layers"><svg class="i"><use href="#leaf"/></svg></button>
        <button aria-label="Zoom area"><svg class="i"><use href="#redlens"/></svg></button>
      </div>
      <div class="pal h-three second" role="toolbar" aria-label="Trim tools">
        <button aria-label="Break"><svg class="i" viewBox="0 0 18 18"><path d="M2 2l14 14M16 3L2 15" stroke="#33321e" stroke-width="1.500"/><circle cx="9" cy="9" r="2.500" stroke="#c44"/></svg></button>
        <button aria-label="Join"><svg class="i" viewBox="0 0 18 18"><path d="M2 5l4 8 7 2 2-13" stroke="#22239a" stroke-width="1.500"/><circle cx="5" cy="12" r="2.500" stroke="#c44"/></svg></button>
        <button aria-label="Merge"><svg class="i" viewBox="0 0 18 18"><path d="M4 15L15 3M3 3l3 12M6 15l10-3" stroke="#2c36c9" stroke-width="1.500"/><path d="M2 9l4 6" stroke="#1a9960"/></svg></button>
      </div>
    </div>
    <div class="col">
      <div class="pal h-notes" role="toolbar" aria-label="Notes">
        <button aria-label="Edit parcel"><svg class="i" viewBox="0 0 18 18"><path d="M9 3l7 7-7 6-7-7z" fill="#fff"/><path d="M6 11l6-9 2 1-6 10z" fill="#e8d87a"/></svg></button>
        <button aria-label="Edit table"><svg class="i" viewBox="0 0 18 18"><path d="M2 5h10M2 9h9M2 13h10M2 16h8" stroke="#159a9a" stroke-dasharray="3 1" stroke-width="1.500"/><path d="M8 12l6-10 2 1-6 10z" fill="#e8d87a"/></svg></button>
        <button aria-label="Points"><svg class="i" viewBox="0 0 18 18"><path d="M3 15l4-5 3 1 4-6" stroke="#888" stroke-dasharray="2 1"/><path d="M9 4h2v2H9zM5 9h2v2H5zM13 8h2v2h-2zM3 14h2v2H3z" fill="#111"/></svg></button>
        <button aria-label="Document"><svg class="i" viewBox="0 0 18 18"><path d="M5 3h9v13H5z" fill="#fff" stroke-width="1.600"/><path d="M7 6h5M7 9h5M7 12h5"/></svg></button>
        <button aria-label="Dark band"><svg class="i" viewBox="0 0 18 18"><path d="M2 5h14v7H2z" fill="#505050" stroke="#383838"/><path d="M2 8h14" stroke="#777"/></svg></button>
        <button aria-label="Columns"><svg class="i" viewBox="0 0 18 18"><path d="M9 2v14M12 2v14M15 2v14" stroke-width="2"/></svg></button>
        <button aria-label="BS"><span class="glyph bold">BS</span></button>
        <i class="hsep"></i>
        <button aria-label="Contour"><svg class="i" viewBox="0 0 18 18"><path d="M4 3h8v4H8v4h6l2 4H3l1-4h2V7H4z" fill="#f4e17c" stroke="#8c3c20"/><path d="M6 5h4M5 13h8"/></svg></button>
        <button aria-label="Clock"><svg class="i" viewBox="0 0 18 18"><circle cx="9" cy="9" r="6"/><path d="M9 9l4-4" stroke="#c22" stroke-width="1.600"/></svg></button>
        <button aria-label="Perpendicular mark"><svg class="i" viewBox="0 0 18 18"><path d="M10 2v12" stroke="#3366cc"/><path d="M2 14h14" stroke-width="1.500"/><path d="M3 13h1v2H3zM10 6v1M10 13v2M14 13h1v2h-1z" stroke="#c22" stroke-width="2"/></svg></button>
        <button aria-label="Rotate box"><svg class="i" viewBox="0 0 18 18"><path d="M6 4l9 4-3 7-9-5z"/><path d="M5 3h2v2H5zM14 7h2v2h-2zM11 14h2v2h-2zM2 9h2v2H2z" stroke="#c22"/></svg></button>
        <button aria-label="Distance"><svg class="i shade" viewBox="0 0 18 18"><circle cx="5" cy="12" r="2"/><circle cx="9" cy="7" r="2"/><path d="M6 11l3-3M9 9h7M13 7l3 2-3 2"/></svg></button>
        <button aria-label="Book"><svg class="i" viewBox="0 0 18 18"><path d="M2 13V6h6v7M9 13V6h6v7M1 13h16" stroke="#1d90b8" stroke-width="1.400"/></svg></button>
        <button aria-label="Profile"><svg class="i" viewBox="0 0 18 18"><path d="M2 13h14M2 11l3-3 2 3 2-5 3 5 2-2 2 2" stroke="#b52222" stroke-width="1.400"/></svg></button>
        <button aria-label="Quadrant"><svg class="i" viewBox="0 0 18 18"><path d="M4 15V4c6 0 9 5 9 10z" fill="#f7e87c"/><path d="M2 15h14M4 3v12" stroke-width="1.800"/></svg></button>
        <button aria-label="Grid"><svg class="i shade" viewBox="0 0 18 18"><path d="M1 2h15v10" stroke="#12a070" stroke-width="2"/><path d="M4 6h9M4 10h9M4 14h9" stroke-width="2" stroke-dasharray="2 2"/></svg></button>
        <button aria-label="Trim corner"><svg class="i" viewBox="0 0 18 18"><path d="M2 2l13 14M15 3L2 15" stroke="#33321e" stroke-width="1.500"/><path d="M5 8l4 4" stroke="#19a060" stroke-width="2"/><path d="M17 12v5h-5z" fill="#111" stroke="none"/></svg></button>
        <button aria-label="Tree"><svg class="i" viewBox="0 0 18 18"><path d="M8 2c5 0 7 8 1 9-7 0-7-8-1-9z" fill="#6ed0c4" stroke="#0b6e72"/><path d="M8 5v12M5 7l3 3 3-3M5 17h6" stroke="#0b4e52"/></svg></button>
      </div>
    </div>
    <div class="col">
      <div class="pal h-text" role="toolbar" aria-label="Text tools">
        <button aria-label="Green text"><svg class="i" viewBox="0 0 18 18"><path d="M3 16L9 3l6 13M5 11h8" stroke="#0b9e42" stroke-width="3"/><path d="M2 7l3-3h8l3 4" stroke="#14d0a0" stroke-width="1.500"/></svg></button>
        <button aria-label="Color text"><svg class="i" viewBox="0 0 18 18"><path d="M8 3l8 11H4z" fill="#ffe21f" stroke="#22349a"/><path d="M2 13l5-7 4 7z" fill="#e42a1a"/><path d="M17 12v5h-5z" fill="#111" stroke="none"/></svg></button>
        <button aria-label="Change case"><svg class="i shade" viewBox="0 0 18 18"><path d="M8 4C4 1 1 8 5 9l3-1" stroke="#d81c1c" stroke-width="2"/><path d="M2 16L16 2" stroke="#128040" stroke-width="1.500"/><path d="M15 10c-5-2-6 6-1 5v-5" stroke="#1560b8" stroke-width="1.600"/></svg></button>
        <button aria-label="Text frame"><svg class="i" viewBox="0 0 18 18"><path d="M2 3h13v7H2z" stroke="#22239a" stroke-width="1.600"/><path d="M6 8v8M4 12l3 4M11 8l4 8M15 8l-4 8" stroke="#22239a"/></svg></button>
        <button aria-label="Sum"><span class="glyph sum">Σ</span></button>
        <button aria-label="Fraction sum"><svg class="i" viewBox="0 0 18 18"><path d="M12 3H6l3 3-3 3h6M3 9h12M12 11H7l2 3-3 3h6" stroke="#195c2c" stroke-width="1.500"/></svg></button>
        <button aria-label="Operators"><svg class="i shade" viewBox="0 0 18 18"><path d="M2 5h6M5 2v6M7 10l5 5M12 10l-5 5M14 3v2M14 8v2"/></svg></button>
        <button aria-label="Pages"><svg class="i" viewBox="0 0 18 18"><path d="M2 9l7-4 7 4v5l-7 3-7-3z" fill="#fff"/><path d="M5 3h5l3 3v6H5z" fill="#f8efa0"/><path d="M2 10l7 4 7-4"/></svg></button>
        <button aria-label="Align"><svg class="i" viewBox="0 0 18 18"><path d="M2 9h4" stroke-width="2"/><path d="M5 5l5 4-5 4z" fill="#111" stroke="none"/><path d="M11 4v10M11 10c2-3 5-2 5 0v3" stroke-width="1.700"/></svg></button>
        <button aria-label="Hash grid"><svg class="i" viewBox="0 0 18 18"><path d="M5 2v14M12 2v14M2 6h14M2 12h14" stroke="#33314e" stroke-width="1.500"/><path d="M9 4v10M3 9h12" stroke="#8a6ad0"/></svg></button>
      </div>
      <div class="pal h-four second" role="toolbar" aria-label="Move tools">
        <button aria-label="Stretch line"><svg class="i" viewBox="0 0 18 18"><path d="M4 4l9 9" stroke-width="1.500"/><path d="M3 3l5 1-4 4zM15 14l-6-1 4-4z" fill="#111" stroke="none"/><path d="M2 9l6 6" stroke="#c22"/></svg></button>
        <button aria-label="Stretch by value"><svg class="i shade" viewBox="0 0 18 18"><path d="M3 4l10 10M4 8V4h4"/><path d="M15 3c-6 0-7 9-2 9 4 0 3-5-1-5M3 10l5 5" stroke="#d81c1c" stroke-width="2"/></svg></button>
        <button aria-label="Step lines"><svg class="i" viewBox="0 0 18 18"><path d="M2 5l5 5M5 9l6 4" stroke="#c22"/><path d="M3 3l3 3M9 8l6-3v5l-5 4M6 14l3-5" stroke-width="2"/></svg></button>
        <button aria-label="Closed outline"><svg class="i" viewBox="0 0 18 18"><path d="M4 5l5-2 5 3 1 5-4 4-6-1-2-4z" stroke="#a020b8" stroke-width="1.500"/><path d="M3 4h2M14 6h2M4 14h2M9 2v2M12 15h2" stroke="#a020b8" stroke-width="2"/></svg></button>
      </div>
      <div class="pal h-three second" role="toolbar" aria-label="Grid tools">
        <button aria-label="Grid corner"><svg class="i shade" viewBox="0 0 18 18"><path d="M1 2h15v14" stroke="#12a070" stroke-width="2"/><path d="M3 7h9M3 11h9M3 15h9" stroke-width="2" stroke-dasharray="2 2"/></svg></button>
        <button aria-label="Grid dots"><svg class="i shade" viewBox="0 0 18 18"><path d="M3 5h12M3 9h12M3 13h12" stroke-width="2.500" stroke-dasharray="2.500 2"/></svg></button>
        <button aria-label="XY"><svg class="i shade" viewBox="0 0 18 18"><path d="M2 2l5 5M7 2L2 7M9 6l3 4 3-4M12 10v5"/><path d="M2 13h3M7 16h2" stroke="#2a9a8a"/></svg></button>
      </div>
    </div>
  </div>

  <section class="view">
    <svg class="drawing" viewBox="99 120 1131 428" preserveAspectRatio="xMidYMid slice" role="img" aria-label="Parcel drawing">
      <path d="M684 178L723 184 669 508 655 506 705 208z" fill="url(#hatch)" stroke="#fff"/>
      <g fill="none">
        <path d="M443 133L678 171L685 178" stroke="#3fc6c6" stroke-dasharray="15 5"/>
        <path d="M653 513L648 544" stroke="#3fc6c6" stroke-dasharray="13 5"/>
        <path d="M586 163L684 178L705 208L655 506L536 487z" stroke="#c030c8"/>
        <path d="M586 163L684 178" stroke="#eab8ee" stroke-dasharray="2 7"/>
        <path d="M536 487L655 506" stroke="#eab8ee" stroke-dasharray="2 12"/>
        <path d="M522 486h2M676 510h2M684 172h2M673 186h2" stroke="#901010"/>
      </g>
      <g class="measure">
        <text transform="translate(634 183) rotate(2)">6.00</text>
        <text transform="translate(704 180) rotate(5)">2.44</text>
        <text transform="translate(680 205) rotate(52)">2.29</text>
        <text transform="translate(551 324) rotate(-83)">20.00</text>
        <text transform="translate(676 358) rotate(-84)">18.35</text>
        <text transform="translate(710 349) rotate(-82)">20.00</text>
        <text transform="translate(593 512) rotate(3)">7.30</text>
        <text transform="translate(666 525) rotate(3)">0.84</text>
      </g>
      <g class="street">
        <text transform="translate(614 154) rotate(9)">Đuờng Tân Hương LG 20M</text>
        <text transform="translate(726 347) rotate(-81)">HẺM 87 TÂN HƯƠNG 6M</text>
      </g>
      <text class="area" x="634" y="284">DT= 148.0 m²</text>
    </svg>
    <div class="tabs">
      <button aria-label="First"><svg viewBox="0 0 16 14"><path d="M5 3v8M12 3v8L6 7z"/></svg></button>
      <button aria-label="Previous"><svg viewBox="0 0 16 14"><path d="M10 3v8L6 7z"/></svg></button>
      <button aria-label="Next"><svg viewBox="0 0 16 14"><path d="M6 3v8l4-4z"/></svg></button>
      <button aria-label="Last"><svg viewBox="0 0 16 14"><path d="M11 3v8M4 3v8l6-4z"/></svg></button>
      <button class="tab on"><svg class="tab-edge" viewBox="0 0 42 15" preserveAspectRatio="none"><path d="M1 0l5 14h31l4-14z" fill="#000" stroke="#000"/></svg><span>Model</span></button>
      <button class="tab"><svg class="tab-edge" viewBox="0 0 48 15" preserveAspectRatio="none"><path d="M1 0l5 14h36l5-14" fill="#f6f6f6" stroke="#222"/></svg><span>Layout1</span></button>
    </div>
  </section>

  <div class="dock dock-right">
    <div class="col">
      <div class="pal h-snap" role="toolbar" aria-label="Object snap">
        <button aria-label="Temporary track"><svg class="i" viewBox="0 0 18 18"><path d="M2 7h4v4H2zM6 9h6" fill="#2a6292" stroke="#2a6292"/><circle cx="14" cy="9" r="2" fill="#fff" stroke="#2f79a8"/></svg></button>
        <button aria-label="Snap from"><svg class="i" viewBox="0 0 18 18"><path d="M4 13V5h8" stroke-dasharray="3 1.500" stroke-width="1.500"/><path d="M2 13h4v4H2z" fill="#2a6292" stroke="#2a6292"/><circle cx="14" cy="5" r="2" fill="#fff" stroke="#2f79a8"/></svg></button>
        <i class="hsep"></i>
        <button aria-label="Endpoint"><svg class="i" viewBox="0 0 18 18"><path d="M4 14L14 4" stroke-width="1.500"/><circle cx="4" cy="14" r="2" fill="#fff" stroke="#2f79a8"/><circle cx="14" cy="4" r="2" fill="#fff" stroke="#2f79a8"/></svg></button>
        <button aria-label="Midpoint"><svg class="i" viewBox="0 0 18 18"><path d="M2 16L16 2" stroke-width="1.500"/><use href="#node"/></svg></button>
        <button aria-label="Intersection"><svg class="i" viewBox="0 0 18 18"><path d="M2 16L16 2M2 2l14 14" stroke-width="1.500"/><use href="#node"/></svg></button>
        <button aria-label="Apparent intersection"><svg class="i" viewBox="0 0 18 18"><path d="M2 16L16 2" stroke-width="1.500"/><path d="M2 2l14 14" stroke-dasharray="3 2" stroke-width="1.500"/><use href="#node"/></svg></button>
        <button aria-label="Extension"><svg class="i" viewBox="0 0 18 18"><path d="M2 9h5" stroke-width="1.500"/><path d="M8 9h9" stroke-dasharray="1.500 1.500"/></svg></button>
        <i class="hsep"></i>
        <button aria-label="Center"><svg class="i" viewBox="0 0 18 18"><circle cx="9" cy="9" r="6.500" fill="#dbeaf5" stroke="#234"/><circle cx="9" cy="9" r="2.500" fill="#fff" stroke="#2f79a8"/></svg></button>
        <button aria-label="Quadrant snap"><svg class="i" viewBox="0 0 18 18"><circle cx="9" cy="9" r="5" stroke="#234"/><g fill="#fff" stroke="#2f79a8"><circle cx="9" cy="4" r="2"/><circle cx="9" cy="14" r="2"/><circle cx="4" cy="9" r="2"/><circle cx="14" cy="9" r="2"/></g></svg></button>
        <button aria-label="Tangent"><svg class="i" viewBox="0 0 18 18"><circle cx="9" cy="9" r="5.500" fill="#dbeaf5" stroke="#234"/><path d="M3 3h7" stroke="#234"/><circle cx="4" cy="7" r="2" fill="#fff" stroke="#2f79a8"/></svg></button>
        <i class="hsep"></i>
        <button aria-label="Perpendicular"><svg class="i" viewBox="0 0 18 18"><path d="M9 3v9M2 13h14" stroke-width="1.600"/><circle cx="9" cy="12" r="2" fill="#fff" stroke="#2f79a8"/></svg></button>
        <button aria-label="Parallel"><svg class="i" viewBox="0 0 18 18"><path d="M2 13L12 4M6 15L16 5" stroke-width="1.600"/></svg></button>
        <button aria-label="Insert snap"><svg class="i" viewBox="0 0 18 18"><path d="M4 4h9v6H4z" fill="#e8f078" stroke="#335"/><circle cx="12" cy="12" r="3.500" fill="#bfe08a" stroke="#335"/><circle cx="5" cy="11" r="2" fill="#fff" stroke="#2f79a8"/></svg></button>
        <button aria-label="Node"><svg class="i"><use href="#node"/></svg></button>
        <i class="hsep"></i>
        <button aria-label="Nearest"><svg class="i" viewBox="0 0 18 18"><path d="M2 15L13 4M6 6l5 5M15 13l2 3" stroke-width="1.500"/><circle cx="11" cy="8" r="2" fill="#fff" stroke="#2f79a8"/><circle cx="13" cy="12" r="2" stroke="#2f79a8"/></svg></button>
        <button aria-label="No snap"><svg class="i" viewBox="0 0 18 18"><path d="M3 14V8c0-5 7-5 7 0v6" stroke="#7c8a80" stroke-width="3"/><path d="M2 15L14 2" stroke="#e04a20" stroke-width="2"/><path d="M13 12h3v3h-3z"/></svg></button>
        <i class="hsep"></i>
        <button aria-label="Snap settings"><svg class="i" viewBox="0 0 18 18"><path d="M3 14V7c0-5 7-5 7 0v7" stroke="#b52242" stroke-width="3"/><path d="M13 12h3v3h-3z" stroke="#1d6aa8"/></svg></button>
      </div>
    </div>
    <div class="col">
      <div class="pal h-modify" role="toolbar" aria-label="Modify">
        <button aria-label="Erase"><svg class="i" viewBox="0 0 18 18"><path d="M7 9l6-7 4 2-7 8z" fill="#f0b85a" stroke="#6a4210"/><path d="M2 12l5-4 4 3-5 4z" fill="#fff" stroke="#733"/><path d="M2 17h14"/></svg></button>
        <button aria-label="Copy object"><svg class="i" viewBox="0 0 18 18"><circle cx="5" cy="5" r="3" fill="#eee"/><circle cx="13" cy="7" r="3" fill="#eee"/><circle cx="9" cy="12" r="3" fill="#eee"/><circle cx="13" cy="14" r="2" fill="#fff"/></svg></button>
        <button aria-label="Mirror"><svg class="i" viewBox="0 0 18 18"><path d="M7 3v12H2zM11 3v12h5z" fill="#cfe3f2"/><path d="M9 1v16" stroke="#2a6292"/></svg></button>
        <button aria-label="Offset"><svg class="i" viewBox="0 0 18 18"><path d="M2 14h14v-3h-3c3-4-1-9-5-7-4 1-4 5-2 7H2z" fill="#b9d8ee" stroke="#1b4b78" stroke-width="1.400"/><path d="M6 11c0-4 6-4 6 0" stroke="#1b4b78"/></svg></button>
        <button aria-label="Array"><svg class="i" viewBox="0 0 18 18"><path d="M2 2h5v5H2zM11 2h5v5h-5zM2 11h5v5H2zM11 11h5v5h-5z" fill="#dbeaf5" stroke-width="1.500"/></svg></button>
        <button aria-label="Move"><svg class="i" viewBox="0 0 18 18"><path d="M9 3v12M3 9h12" stroke="#2a6292" stroke-width="2"/><path d="M9 1l3 4H6zM9 17l3-4H6zM1 9l4-3v6zM17 9l-4-3v6z" fill="#2a6292" stroke="none"/></svg></button>
        <button aria-label="Rotate object"><svg class="i" viewBox="0 0 18 18"><path d="M6 4a6.500 6.500 0 1 0 6 0" stroke="#3f6ea3" stroke-width="2.200"/><path d="M3 2h6v6z" fill="#3f6ea3" stroke="none"/></svg></button>
        <button aria-label="Scale"><svg class="i" viewBox="0 0 18 18"><path d="M2 2h14v14H2z" fill="#dcecf9" stroke="#2a6292"/><path d="M2 8h8v8H2z" stroke-dasharray="1.500 1.500"/></svg></button>
        <button aria-label="Stretch"><svg class="i" viewBox="0 0 18 18"><path d="M2 2h6v14H2z" stroke-dasharray="2 1.500"/><path d="M8 2l7 14H8z" fill="#b9d8ee"/></svg></button>
        <button aria-label="Trim"><svg class="i" viewBox="0 0 18 18"><path d="M2 9h5"/><path d="M8 9h9" stroke-dasharray="2 1.500"/><path d="M6 15l6-12" stroke="#3f82b8" stroke-width="1.600"/></svg></button>
        <button aria-label="Extend"><svg class="i" viewBox="0 0 18 18"><path d="M2 9h5"/><path d="M8 9h5" stroke-dasharray="1.500 1.500"/><path d="M11 15l5-12" stroke="#3f82b8" stroke-width="1.600"/></svg></button>
        <button aria-label="Break at point"><svg class="i" viewBox="0 0 18 18"><path d="M2 5h14v10H2z" fill="#e3eef6" stroke="#234"/><path d="M8 4h2v2H8z" stroke="#1d6aa8"/></svg></button>
        <button aria-label="Break object"><svg class="i" viewBox="0 0 18 18"><path d="M5 4H2v11h14V4h-3" stroke="#234" fill="#e3eef6"/><path d="M5 3h1v2H5zM12 3h1v2h-1z" stroke="#1d6aa8"/></svg></button>
        <button aria-label="Chamfer"><svg class="i" viewBox="0 0 18 18"><path d="M2 2h14" stroke-dasharray="1.500 1.500"/><path d="M2 3v13" /><path d="M2 12l8-9h6" stroke="#2a6292" stroke-width="1.500"/></svg></button>
        <button aria-label="Fillet"><svg class="i" viewBox="0 0 18 18"><path d="M2 2h14" stroke-dasharray="1.500 1.500"/><path d="M2 3v13"/><path d="M3 14C3 7 8 3 16 3" stroke="#1d6aa8" stroke-width="2"/></svg></button>
        <button aria-label="Explode"><svg class="i" viewBox="0 0 18 18"><path d="M2 8l3-3 2 2 3-2 1 5 3 2-4 1-2 3-2-3-3-1z" fill="#ef7a28" stroke="#8c1f10"/><path d="M11 7l4-5M13 2l3 3" stroke="#777" stroke-width="1.500"/><path d="M6 9h3v3H6z" fill="#ffe21f" stroke="none"/></svg></button>
      </div>
    </div>
  </div>
</main>

<section class="command">
  <div class="console">
    <div class="log"><p>Invalid window specification.</p><p>Command: Specify opposite corner: *Cancel*</p><p>Command: p PAN</p><p>Press ESC or ENTER to exit, or right-click to display shortcut menu.</p></div>
    <input type="text" aria-label="Command line">
  </div>
  <div class="scroll"><button aria-label="Scroll up">▴</button><i></i><button aria-label="Scroll down">▾</button></div>
</section>

<footer class="status">Press pick button and drag to pan.</footer>

<div class="task">
  <svg class="task-art" viewBox="0 0 1281 38" preserveAspectRatio="none" aria-hidden="true">
    <g filter="url(#soft)">
      <path d="M-10-9h300v56H-10z" fill="#8569a8"/><path d="M95-9h170l-35 20-90 6-30-8z" fill="#4d3c50"/><path d="M180 20h110v30H170z" fill="#9c80bc"/><path d="M270-9h110v56h-90z" fill="#a184c0"/><path d="M268-5h40l-20 20z" fill="#93187c"/>
      <path d="M345-9h320v56H395z" fill="#93187c"/><path d="M345-5h40l-10 12-22 6z" fill="#93187c"/><path d="M366-5h28l6 10-20 6z" fill="#777058"/><path d="M345 45l-5-30 45-5 20 10-12 25z" fill="#a98bc9"/><path d="M430 45c15-10 25-40 48-40 16 2 16 24 30 25 14-4 34 15 40 15zM530-5h20l20 36-12 8z" fill="#43124a"/>
      <path d="M562 22l18-30h32l10 22 12 10 24-4v28h-92z" fill="#5d3f86"/><path d="M655-9h290v56H655z" fill="#a98bc9"/><path d="M657 24l38-16 28-12 4 12-20 18z" fill="#357d4e"/><path d="M905-9h60l-22 22-18-4zM1010-9h48l-50 32h-30z" fill="#8b2480"/><path d="M962-9h38l-10 36-42-14z" fill="#30104a"/>
      <path d="M990 42l40-32 60-8 55 40z" fill="#8d587f"/><path d="M1078-9h50l24 54-50-8z" fill="#6a2464"/><path d="M1118-9h180v60h-130z" fill="#7f659e"/>
    </g>
  </svg>
  <button class="app start" aria-label="Start"><svg viewBox="0 0 36 36"><circle cx="18" cy="18" r="16.500" fill="url(#orb)" stroke="#4b6d90"/><path d="M9 12c3-2 5-1 8 0l-2 7c-3-1-5-1-8 0z" fill="#f06a2a"/><path d="M18 12c3 2 5 1 8 0l-2 7c-3 1-5 1-8 0z" fill="#8cc63f"/><path d="M7 20c3-1 5-1 8 0l-2 7c-3-1-5-1-8 0z" fill="#3fa9f0"/><path d="M16 20c3 2 5 1 8 0l-2 7c-3 1-5 1-8 0z" fill="#ffd02e"/></svg></button>
  <button class="app" aria-label="Media player"><svg viewBox="0 0 36 36"><path d="M9 7l20-1v24l-20 1z" fill="#5fa8dc" stroke="#dff0fb"/><path d="M5 7h20v22H5z" fill="#8fc4ea" stroke="#dff0fb"/><circle cx="15" cy="18" r="8.500" fill="#f28a1e" stroke="#fff"/><path d="M12 13v10l8-5z" fill="#fff"/></svg></button>
  <button class="app open" aria-label="Explorer"><svg viewBox="0 0 36 36"><path d="M3 7h9l2-3h14v3h5v22H3z" fill="#f7e08c" stroke="#c3a142"/><path d="M3 11h30v18H3z" fill="#fbeea8"/><path d="M15 6h3M26 8h3" stroke="#d44" stroke-width="2"/><path d="M7 32v-9c0-3 22-3 22 0v9h-6v-6H13v6z" fill="#a6dcf4" stroke="#5ba6cf"/></svg></button>
  <button class="app" aria-label="Chrome"><svg viewBox="0 0 36 36"><circle cx="18" cy="18" r="15" fill="#f4c20d"/><path d="M18 18L5 10.500a15 15 0 0 1 26 0V12H18z" fill="#db4437"/><path d="M5 10.500A15 15 0 0 0 17 33l6-11-5 2-6-3z" fill="#0f9d58"/><circle cx="18" cy="18" r="6.500" fill="#4285f4" stroke="#fff" stroke-width="1.800"/></svg></button>
  <button class="app" aria-label="Internet Explorer"><svg viewBox="0 0 36 36" fill="none"><path d="M28 24c-2 6-8 8-13 6-8-3-8-15-1-19 7-4 15 0 15 9H12" stroke="#35a5e8" stroke-width="5"/><path d="M6 31c-5-3 2-16 12-23 6-5 13-6 12-1" stroke="#f7c325" stroke-width="2.500"/></svg></button>
  <button class="app open lit" aria-label="AutoCAD"><svg viewBox="0 0 36 36"><path d="M3 2h30v31H3z" fill="#16857a" stroke="#e8f6f4"/><path d="M22 3v20h10M27 3v20" stroke="#64c2b4" fill="none"/><path fill-rule="evenodd" d="M6 27l7-20h3l6 20h-4l-2-5h-5l-1 5zM12 18h3l-1-5z" fill="#fff"/><path d="M22 20h6v6h-6zM25 15v16M18 23h14" fill="none" stroke="#cfeee8" stroke-width="1.500"/></svg></button>
  <div class="tray">
    <span class="lang">VI</span>
    <svg class="i" viewBox="0 0 18 18"><path d="M2 7h14v8H2z" fill="#ddd" stroke="#fff"/><path d="M4 9h10M4 11h10M5 13h8" stroke="#666" stroke-dasharray="1 1"/><path d="M5 6c0-4 6 0 9-4" stroke="#fff"/></svg>
    <svg class="i" viewBox="0 0 18 18"><path d="M5 11l4-4 4 4z" fill="#fff" stroke="none"/></svg>
    <svg class="i" viewBox="0 0 18 18"><path d="M3 7h3l4-3v11l-4-3H3z" fill="#fff" stroke="#555"/><path d="M12 6c2 2 2 5 0 7M14 4c3 3 3 8 0 11" stroke="#fff"/></svg>
    <svg class="i" viewBox="0 0 18 18"><path d="M6 5h10v8H6zM8 16h7M11 13v3" stroke="#fff" fill="#556" stroke-width="1.500"/><path d="M2 3v4h4V3M4 7v8h2" stroke="#fff"/></svg>
    <time>9:01 SA<br>24/12/2021</time>
  </div>
  <button class="desk" aria-label="Show desktop"></button>

  <aside class="balloon back">
    <h2><svg class="i"><use href="#info"/></svg>Comm</h2>
    <p>The easy w</p>
    <a href="#here">Click here.</a>
    <svg class="tail" viewBox="0 0 18 19"><path d="M1 0l16 17V0" fill="#ffffe1" stroke="#111"/></svg>
  </aside>
  <aside class="balloon front">
    <h2><svg class="i"><use href="#info"/></svg>Plot and Publish Job Complete</h2>
    <p>No errors or warnings found</p>
    <a href="#plot">Click to view plot and publish details...</a>
    <button class="x" aria-label="Close message"><svg viewBox="0 0 14 14"><path d="M4 4l6 6M10 4l-6 6" stroke="#111" stroke-width="2"/></svg></button>
    <svg class="tail" viewBox="0 0 18 19"><path d="M1 0l16 17V0" fill="#ffffe1" stroke="#111"/></svg>
  </aside>
</div>
</body>
</html>
```
FILE: styles.css
```css
* { box-sizing: border-box; }
body {
  margin: 0;
  min-height: 100vh;
  display: flex;
  flex-direction: column;
  overflow: hidden;
  background: #f0f0f0;
  color: #1a1a1a;
  font: 10px/14px "Liberation Sans", sans-serif;
}
button, select, input { font: inherit; color: inherit; margin: 0; padding: 0; border: 0; background: none; border-radius: 0; }
h1, h2, p { margin: 0; font-size: inherit; font-weight: inherit; }
.defs { position: absolute; width: 0; height: 0; }
.i { display: block; flex: none; width: 18px; height: 18px; fill: none; stroke: #222; stroke-width: 1.2; }
.flat { stroke: none; }
.shade { background: #c6c6c6; }

/* Title bar */
.title {
  position: relative;
  display: flex;
  align-items: center;
  height: 20px;
  background: linear-gradient(90deg, #c8b6da, #b9a3cf 45%, #8a68a8 48%, #8663a5);
  border-bottom: 1px solid #6d5585;
  overflow: hidden;
}
.title-art { position: absolute; inset: 0; width: 100%; height: 100%; }
.title .i { position: relative; width: 16px; height: 16px; }
.title h1 { position: relative; flex: 1; padding-left: 4px; font: 11px/18px "Noto Sans", sans-serif; white-space: nowrap; }
.caption { position: relative; display: flex; align-self: flex-start; width: 96px; height: 16px; margin-right: 3px; border: 1px solid #4c3a66; border-top: 0; border-radius: 0 0 4px 4px; overflow: hidden; }
.caption button { flex: 1; display: grid; place-items: center; background: linear-gradient(#c7b4d8, #8a74a4 50%, #7c6498); border-right: 1px solid #5b4877; }
.caption .close { flex: 0 0 44px; background: linear-gradient(#e09a94, #c4453a 50%, #a82a20); border: 0; }
.caption svg { width: 20px; height: 14px; }

/* Menu */
.menu {
  display: flex;
  align-items: center;
  gap: 12px;
  height: 20px;
  padding-left: 6px;
  background: linear-gradient(#fdfdff, #e6eaf6 45%, #d5dbee 55%, #e3e8f6);
  font: 11px/18px "Noto Sans", sans-serif;
}
.menu .i { width: 16px; height: 16px; margin-right: -6px; }
.menu > button { white-space: nowrap; }
.mdi { display: flex; gap: 2px; margin-left: auto; }
.mdi button { width: 16px; height: 16px; background: #eaf0f8; border: 1px solid #c0cede; }
.mdi svg { display: block; width: 14px; height: 14px; }

/* Toolbars */
.row { display: flex; height: 26px; }
.bar {
  position: relative;
  flex: none;
  display: flex;
  align-items: center;
  justify-content: space-between;
  margin-right: 1px;
  padding: 0 4px 0 12px;
  border-right: 1px solid #b0b0b0;
  border-bottom: 1px solid #b8b8b8;
  box-shadow: inset 1px 1px #fff;
}
.bar::before { content: ""; position: absolute; left: 3px; top: 3px; bottom: 3px; width: 6px; border: solid #a8a8a8; border-width: 0 1px; background: linear-gradient(90deg, #fff 2px, #a8a8a8 2px, #a8a8a8 3px, #fff 3px); }
.bar > button { flex: none; display: grid; place-items: center; width: 20px; height: 22px; }
.bar > .drop { width: 10px; color: #b0b0b0; }
.sep { flex: none; width: 4px; height: 17px; border: solid transparent; border-width: 0 2px 0 1px; background: #222 padding-box; }
.w-standard { width: 505px; }
.w-solid { width: 421px; }
.w-visual { width: 167px; }
.w-sheet { width: 80px; }
.w-layers { width: 361px; }
.w-styles { width: 255px; }
.w-model { width: 333px; }
.w-order { width: 102px; }
.w-props { width: 555px; }
.w-dim { width: 481px; }

.combo { position: relative; flex: none; display: flex; align-items: center; height: 20px; padding-left: 5px; border: 1px solid #b5b5b5; background: linear-gradient(#f8f8f8, #f8f8f8) right / 17px 100% no-repeat #efefef; color: #777; }
.combo::after { content: ""; margin: 0 5px; border: 4px solid transparent; border-top-color: #999; border-bottom: 0; }
.combo select { flex: 1; min-width: 0; appearance: none; outline: 0; }
.combo .i { width: 15px; height: 15px; }
.c-layer { width: 280px; }
.c-style { width: 94px; }
.c-color { width: 141px; }
.c-ltype { width: 149px; }
.c-weight { width: 117px; }
.c-plot { width: 113px; padding-left: 8px; }
.swatch { flex: none; width: 9px; height: 9px; margin-right: 4px; background: #f00000; border: 1px solid #222; }
.c-layer .swatch { margin-right: 6px; }
.rule { flex: none; width: 57px; height: 1px; margin: 0 4px 0 -2px; background: #111; }
.rule.short { width: 33px; }

/* Workspace */
.work { flex: 1; min-height: 0; display: flex; border-top: 1px solid #777; }
.dock { flex: none; display: grid; align-items: start; }
.dock-left { grid-template-columns: repeat(4, 1fr); width: 98px; }
.dock-right { grid-template-columns: repeat(2, 1fr); width: 51px; padding-left: 1px; }
.pal {
  position: relative;
  display: flex;
  flex-direction: column;
  align-items: center;
  justify-content: space-between;
  padding: 10px 0 7px;
  border-right: 1px solid #a8a8a8;
  border-bottom: 1px solid #a8a8a8;
  box-shadow: inset 1px 1px #fff;
}
.pal::before { content: ""; position: absolute; top: 2px; left: 3px; right: 3px; height: 6px; border: solid #a8a8a8; border-width: 1px 0; background: linear-gradient(#fff 1px, #a8a8a8 1px, #a8a8a8 2px, #fff 2px); }
.pal.second { padding-top: 11px; }
.pal button { display: grid; place-items: center; width: 20px; height: 18px; }
.pal .i { width: 17px; height: 17px; }
.pal .shade { width: 16px; height: 16px; }
.hsep { width: 18px; height: 4px; border: solid transparent; border-width: 1px 0 2px; background: #aaa padding-box; }
.glyph { font: 10px/16px "Liberation Sans", sans-serif; color: #222; }
.glyph.bold { font: bold 12px/16px "Liberation Mono", monospace; }
.glyph.sum { font: bold 18px/16px "Liberation Serif", serif; color: #8c1018; }
.h-draw { height: 366px; }
.h-survey { height: 326px; }
.h-notes { height: 391px; }
.h-text { height: 221px; }
.h-snap { height: 393px; }
.h-modify { height: 345px; }
.h-four { height: 101px; }
.h-three { height: 77px; }

.view { flex: 1; min-width: 0; display: flex; flex-direction: column; border-left: 1px solid #555; }
.drawing { flex: 1; display: block; width: 100%; min-height: 0; background: #000; }
.measure { fill: #26dd26; font: 12px "Noto Sans", sans-serif; text-anchor: middle; }
.street { fill: #f01414; font: bold 10px "Liberation Sans", sans-serif; text-anchor: middle; }
.area { fill: #fff; font: bold 16px "Liberation Sans", sans-serif; text-anchor: middle; }
.tabs { flex: none; display: flex; height: 18px; padding-bottom: 3px; }
.tabs > button { width: 17px; background: #fff; border: solid #c8c8c8; border-width: 0 1px 1px 0; }
.tabs svg { display: block; width: 16px; height: 14px; fill: #111; stroke: #111; }
.tabs > .tab { position: relative; width: 48px; margin-left: -3px; border: 0; color: #aaa; background: none; }
.tabs > .on { z-index: 1; margin-left: 3px; width: 42px; color: #fff; }
.tabs .tab-edge { position: absolute; inset: 0; width: 100%; height: 100%; }
.tab span { position: relative; }

/* Command window */
.command { flex: none; display: flex; height: 94px; padding: 10px 8px 3px 16px; position: relative; border-top: 2px solid #fff; box-shadow: inset 0 2px #8c8c8c; }
.command::before { content: ""; position: absolute; left: 7px; top: 9px; bottom: 4px; width: 6px; border: solid #aaa; border-width: 0 1px; background: linear-gradient(90deg, #fff 2px, #aaa 2px, #aaa 3px, #fff 3px); }
.console { flex: 1; display: flex; flex-direction: column; background: #fff; border: solid #666; border-width: 2px 0 0 1px; }
.log { height: 60px; border-bottom: 1px solid #aaa; }
.log p, .command input { font: 12px/15px "Liberation Mono", monospace; color: #111; white-space: pre; }
.command input { flex: 1; width: 100%; outline: 0; }
.scroll { width: 16px; height: 62px; display: flex; flex-direction: column; align-items: center; border-top: 2px solid #666; }
.scroll button { height: 16px; font-size: 9px; }
.scroll i { width: 14px; height: 15px; margin: 12px 0 2px; background: #ddd; border: 1px solid #aaa; border-radius: 2px; }

.status { flex: none; height: 22px; padding-left: 7px; line-height: 24px; background: #f1eeed; border-top: 1px solid #888; box-shadow: inset 0 2px #fff; }

/* Taskbar */
.task { position: relative; flex: none; display: flex; align-items: stretch; height: 37px; border-top: 1px solid #75608d; }
.task-art { position: absolute; inset: 0; width: 100%; height: 100%; }
.app { position: relative; width: 55px; margin-right: 3px; display: grid; place-items: center; }
.app svg { width: 32px; height: 32px; }
.app.start { width: 50px; margin-right: 6px; }
.start svg { width: 35px; height: 35px; }
.open { background: rgb(225 225 200 / .4); border: 1px solid #d8cbe4; border-radius: 2px; box-shadow: inset 0 0 0 1px rgb(70 50 90 / .4); }
.lit { background: linear-gradient(135deg, #f3ecf5, #d98fc0); }
.tray { position: relative; display: flex; align-items: center; margin-left: auto; gap: 5px; color: #fff; }
.tray .i { width: 17px; height: 17px; }
.tray time, .lang { font: 10px/15px "Noto Sans", sans-serif; }
.tray time { width: 60px; margin-left: 8px; text-align: center; }
.desk { position: relative; width: 13px; margin-left: 9px; border: 1px solid #cbbcd9; background: linear-gradient(#b9a5cc, #806599); }

/* Notification balloons */
.balloon { position: absolute; bottom: 65px; height: 73px; padding: 7px 13px; background: #ffffe1; border: 1px solid #111; border-radius: 14px; white-space: nowrap; }
.balloon h2 { display: flex; align-items: center; gap: 8px; margin-left: -7px; height: 18px; font-size: 11px; font-weight: bold; color: #000; }
.balloon p { margin-top: 4px; }
.balloon a { display: block; margin-top: 4px; color: #1a1ab0; width: max-content; }
.balloon.back { right: 82px; width: 238px; }
.balloon.front { right: 14px; width: 237px; }
.tail { position: absolute; top: 71px; right: 54px; width: 18px; height: 19px; }
.back .tail { right: 24px; }
.x { position: absolute; top: 9px; right: 8px; width: 15px; height: 15px; background: #fff; border: 1px solid #aaa; }
.x svg { display: block; width: 13px; height: 13px; }
```
